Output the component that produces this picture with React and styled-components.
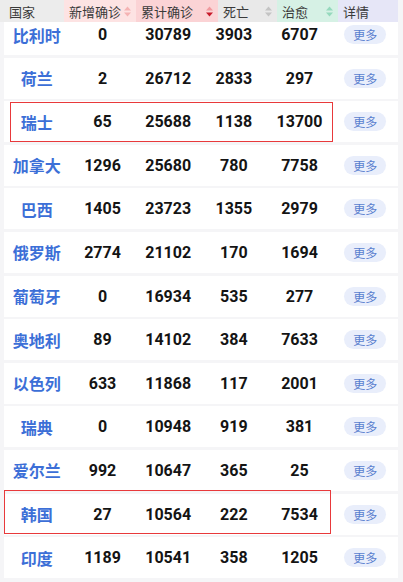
import styled, { createGlobalStyle } from "styled-components";

const GlobalStyle = createGlobalStyle`
  html, body {
    margin: 0;
    padding: 0;
    background: #f5f5f7;
    font-family: Roboto, "Noto Sans CJK SC", sans-serif;
  }
`;

const rows = [
  ["比利时", 0, 30789, 3903, 6707],
  ["荷兰", 2, 26712, 2833, 297],
  ["瑞士", 65, 25688, 1138, 13700, { top: 1, bottom: 0, left: 6, right: 65 }],
  ["加拿大", 1296, 25680, 780, 7758],
  ["巴西", 1405, 23723, 1355, 2979],
  ["俄罗斯", 2774, 21102, 170, 1694],
  ["葡萄牙", 0, 16934, 535, 277],
  ["奥地利", 89, 14102, 384, 7633],
  ["以色列", 633, 11868, 117, 2001],
  ["瑞典", 0, 10948, 919, 381],
  ["爱尔兰", 992, 10647, 365, 25],
  ["韩国", 27, 10564, 222, 7534, { top: -4, bottom: 1, left: 0, right: 67 }],
  ["印度", 1189, 10541, 358, 1205],
];

const headers = [
  { label: "国家", bg: "#ececec", width: 64, pad: 9 },
  { label: "新增确诊", bg: "#fde3e3", width: 72, sort: ["#f5b3b3", "#f5b3b3"] },
  { label: "累计确诊", bg: "#fbd3d5", width: 82, sort: ["#f09a9e", "#c81a2a"] },
  { label: "死亡", bg: "#e9e9e9", width: 59, sort: ["#c4c4c4", "#c4c4c4"] },
  { label: "治愈", bg: "#d6f1e5", width: 61, sort: ["#95d9bd", "#95d9bd"] },
  { label: "详情", bg: "#e6e6f7", width: 60 },
];

const Page = styled.div`
  position: relative;
  width: 403px;
  min-height: 582px;
`;

const HeaderBar = styled.div`
  position: absolute;
  top: 0;
  left: 0;
  z-index: 2;
  display: flex;
  height: 22px;
`;

const HeadCell = styled.div`
  width: ${(p) => p.$width}px;
  background: ${(p) => p.$bg};
  display: flex;
  align-items: center;
  justify-content: space-between;
  padding: 0 5px 0 ${(p) => p.$pad || 5}px;
  box-sizing: border-box;
  font-size: 13px;
  color: #3a3a3a;
  font-family: "Noto Sans CJK SC", sans-serif;
`;

const List = styled.div`
  display: flex;
  flex-direction: column;
  gap: 2.6px;
  padding: 14px 5px 0 4px;
`;

const Row = styled.div`
  position: relative;
  height: 41px;
  background: #fff;
  display: grid;
  grid-template-columns: repeat(6, 1fr);
  align-items: center;
  justify-items: center;

  &::after {
    content: "";
    display: ${(p) => (p.$mark ? "block" : "none")};
    position: absolute;
    top: ${(p) => p.$mark?.top ?? 0}px;
    bottom: ${(p) => p.$mark?.bottom ?? 0}px;
    left: ${(p) => p.$mark?.left ?? 0}px;
    right: ${(p) => p.$mark?.right ?? 0}px;
    border: 1px solid #e8393b;
    pointer-events: none;
  }
`;

const Country = styled.span`
  font-family: "Noto Sans CJK SC", sans-serif;
  font-weight: 700;
  font-size: 16px;
  color: #3c6fd7;
`;

const Num = styled.span`
  font-family: Roboto, sans-serif;
  font-weight: 700;
  font-size: 16px;
  color: #141414;
`;

const MoreButton = styled.span`
  display: inline-flex;
  align-items: center;
  justify-content: center;
  width: 42px;
  height: 19px;
  border-radius: 10px;
  background: #e9eefb;
  color: #5a7fcf;
  font-size: 12px;
  font-family: "Noto Sans CJK SC", sans-serif;
`;

const SortIcon = ({ colors }) => (
  <svg width="7" height="11" viewBox="0 0 7 11">
    <polygon points="0,4.5 3.5,0.5 7,4.5" fill={colors[0]} />
    <polygon points="0,6.5 7,6.5 3.5,10.5" fill={colors[1]} />
  </svg>
);

export default function App() {
  return (
    <Page>
      <GlobalStyle />
      <HeaderBar>
        {headers.map((h) => (
          <HeadCell key={h.label} $width={h.width} $bg={h.bg} $pad={h.pad}>
            <span>{h.label}</span>
            {h.sort && <SortIcon colors={h.sort} />}
          </HeadCell>
        ))}
      </HeaderBar>
      <List>
        {rows.map(([name, add, total, dead, cured, mark]) => (
          <Row key={name} $mark={mark}>
            <Country>{name}</Country>
            <Num>{add}</Num>
            <Num>{total}</Num>
            <Num>{dead}</Num>
            <Num>{cured}</Num>
            <MoreButton>更多</MoreButton>
          </Row>
        ))}
      </List>
    </Page>
  );
}
